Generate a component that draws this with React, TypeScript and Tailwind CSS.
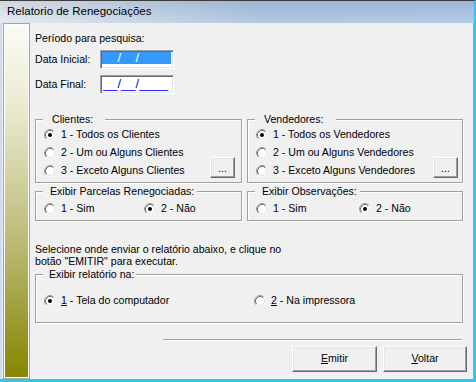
import clsx from "clsx";

const sunken =
  "border border-t-[#a0a0a0] border-l-[#a0a0a0] border-r-white border-b-white shadow-[inset_1px_1px_0_#696969,inset_-1px_-1px_0_#e3e3e3]";
const raised =
  "border border-t-white border-l-white border-r-[#696969] border-b-[#696969] shadow-[inset_-1px_-1px_0_#a0a0a0,inset_1px_1px_0_#e3e3e3]";

const Radio: React.FC<{ checked?: boolean }> = ({ checked }) => (
  <svg width="12" height="12" viewBox="0 0 12 12" className="shrink-0">
    <circle cx="6" cy="6" r="5.5" fill="#fff" />
    <path d="M2.11 9.89A5.5 5.5 0 0 1 9.89 2.11" stroke="#9a9a9a" fill="none" />
    <path d="M9.89 2.11A5.5 5.5 0 0 1 2.11 9.89" stroke="#f8f8f8" fill="none" />
    <path d="M2.82 9.18A4.5 4.5 0 0 1 9.18 2.82" stroke="#6a6a6a" fill="none" />
    <path d="M9.18 2.82A4.5 4.5 0 0 1 2.82 9.18" stroke="#e0e0e0" fill="none" />
    {checked && <circle cx="6" cy="6" r="2" fill="#000" />}
  </svg>
);

const Option: React.FC<{ checked?: boolean; className?: string; children: React.ReactNode }> = ({
  checked,
  className,
  children,
}) => (
  <div className={clsx("flex items-center gap-[5px] whitespace-nowrap", className)}>
    <Radio checked={checked} />
    <span>{children}</span>
  </div>
);

const Group: React.FC<{ label: string; labelClass: string; className?: string; children: React.ReactNode }> = ({
  label,
  labelClass,
  className,
  children,
}) => (
  <div
    className={clsx(
      "relative border border-[#a0a0a0] shadow-[inset_1px_1px_0_#fff,1px_1px_0_#fff]",
      className
    )}
  >
    <span className={clsx("absolute -top-[7px] left-[7px] bg-[#f0f0f0] leading-[13px] whitespace-nowrap", labelClass)}>
      {label}
    </span>
    {children}
  </div>
);

const DotsButton: React.FC<{ className?: string }> = ({ className }) => (
  <button className={clsx(raised, "w-[25px] h-[21px] bg-[#f0f0f0] flex items-end justify-center pb-[4px] leading-[10px]", className)}>
    ...
  </button>
);

export default function App() {
  return (
    <div className="w-[476px] h-[382px] flex flex-col bg-[#f0f0f0] text-[10.6px] text-black font-['Liberation_Sans',Arial,sans-serif] border-t border-t-[#3c3c3c] border-r-2 border-r-[#2fc6ee] border-b-2 border-b-[#2fc6ee] overflow-hidden">
      {/* title */}
      <div className="h-[22px] shrink-0 flex items-center pl-[7px] text-[11.5px] bg-[linear-gradient(to_bottom,rgba(40,70,120,0.10),rgba(255,255,255,0.12)),linear-gradient(to_right,#e4e8ec,#c2d2e4_30%,#a8c1de_55%,#aac4e2)]">
        Relatorio de Renegociações
      </div>

      <div className="flex flex-1 min-h-0 border-r border-b border-[#a0a0a0]">
        <div className="w-[3px] bg-[#d2dce8] border-r border-[#e8eef4]" />
        <div className="w-[27px] border border-[#a4a4a4] shadow-[inset_1px_1px_0_#fff,inset_-1px_-1px_0_#fff] bg-[linear-gradient(to_bottom,#fbfbf6_0%,#ececd4_22%,#d0d09e_45%,#b2b264_68%,#98982a_86%,#868600_100%)]" />

        {/* content */}
        <div className="flex-1 flex flex-col pl-[5px] pt-[9px]">
          <div className="leading-[13px]">Período para pesquisa:</div>

          <div className="mt-[5px] flex items-center h-[19px]">
            <span className="w-[65px]">Data Inicial:</span>
            <div className={clsx(sunken, "w-[74px] h-[19px] bg-white pl-[1px] pt-[1px]")}>
              <div className="h-[12px] w-[69px] bg-[#3399ff] text-white text-[13px] leading-[11px] pl-[1px] whitespace-nowrap">
                __/__/____
              </div>
            </div>
          </div>

          <div className="mt-[6px] flex items-center h-[19px]">
            <span className="w-[65px]">Data Final:</span>
            <div className={clsx(sunken, "w-[74px] h-[19px] bg-white pl-[2px] pt-[1px]")}>
              <div className="h-[14px] text-[#0000ff] text-[13px] leading-[13px] whitespace-nowrap">
                __/__/____
              </div>
            </div>
          </div>

          <div className="mt-[25px] flex gap-[5px]">
            <Group label="Clientes:" labelClass="pl-[9px] w-[62px]" className="w-[207px] h-[64px]">
              <div className="flex items-end justify-between pl-[8px] pr-[6px] pt-[6px]">
                <div className="flex flex-col">
                  <Option checked className="h-[18px]">1 - Todos os Clientes</Option>
                  <Option className="h-[18px]">2 - Um ou Alguns Clientes</Option>
                  <Option className="h-[18px]">3 - Exceto Alguns Clientes</Option>
                </div>
                <DotsButton className="mb-[2px]" />
              </div>
            </Group>
            <Group label="Vendedores:" labelClass="pl-[9px] w-[81px]" className="w-[216px] h-[64px]">
              <div className="flex items-end justify-between pl-[8px] pr-[4px] pt-[6px]">
                <div className="flex flex-col">
                  <Option checked className="h-[18px]">1 - Todos os Vendedores</Option>
                  <Option className="h-[18px]">2 - Um ou Alguns Vendedores</Option>
                  <Option className="h-[18px]">3 - Exceto Alguns Vendedores</Option>
                </div>
                <DotsButton className="mb-[2px]" />
              </div>
            </Group>
          </div>

          <div className="mt-[8px] flex gap-[5px]">
            <Group label="Exibir Parcelas Renegociadas:" labelClass="pl-[7px] w-[154px]" className="w-[207px] h-[30px]">
              <div className="flex pl-[8px] pt-[9px]">
                <Option className="w-[100px] h-[16px]">1 - Sim</Option>
                <Option checked className="h-[16px]">2 - Não</Option>
              </div>
            </Group>
            <Group label="Exibir Observações:" labelClass="pl-[7px] w-[105px]" className="w-[216px] h-[30px]">
              <div className="flex pl-[8px] pt-[9px]">
                <Option className="w-[103px] h-[16px]">1 - Sim</Option>
                <Option checked className="h-[16px]">2 - Não</Option>
              </div>
            </Group>
          </div>

          <div className="mt-[22px] leading-[12px]">
            <div>Selecione onde enviar o relatório abaixo, e clique no</div>
            <div>botão "EMITIR" para executar.</div>
          </div>

          <Group label="Exibir relatório na:" labelClass="pl-[6px] w-[93px]" className="mt-[7px] w-[428px] h-[49px]">
            <div className="flex pl-[8px] pt-[18px]">
              <Option checked className="w-[210px] h-[16px]">
                <span className="underline">1</span> - Tela do computador
              </Option>
              <Option className="h-[16px]">
                <span className="underline">2</span> - Na impressora
              </Option>
            </div>
          </Group>

          <div className="mt-[16px] ml-[128px] w-[299px] h-[2px] border-t border-t-[#a0a0a0] border-b border-b-white" />

          <div className="mt-[5px] flex justify-end gap-[6px] pr-[6px]">
            <button className={clsx(raised, "w-[85px] h-[26px] bg-[#f0f0f0]")}>
              <span className="underline">E</span>mitir
            </button>
            <button className={clsx(raised, "w-[84px] h-[26px] bg-[#f0f0f0]")}>
              <span className="underline">V</span>oltar
            </button>
          </div>
        </div>
      </div>
    </div>
  );
}
